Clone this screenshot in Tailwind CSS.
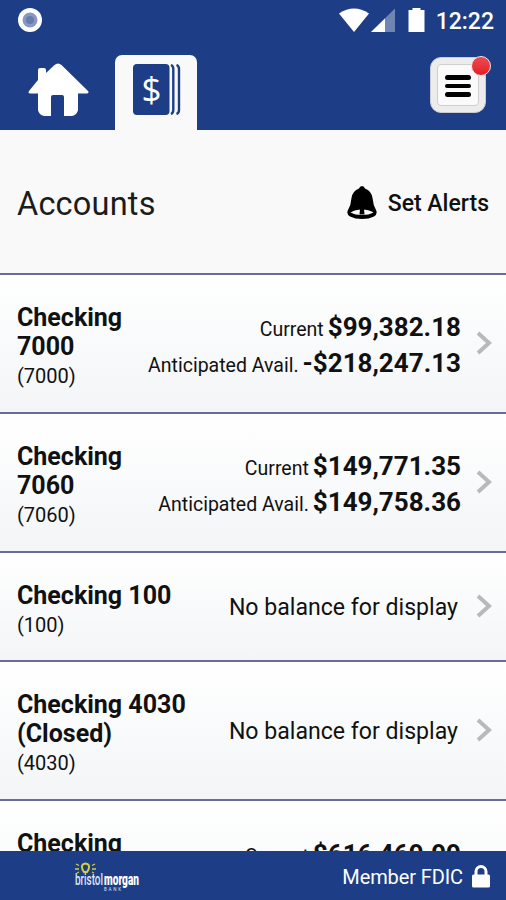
<!DOCTYPE html>
<html lang="en">
<head>
  <meta charset="UTF-8">
  <meta name="viewport" content="width=device-width, initial-scale=1.0">
  <title>Accounts</title>
  <script src="https://cdn.jsdelivr.net/npm/@tailwindcss/browser@4"></script>
</head>
<body class="h-[900px] w-[506px] overflow-hidden flex flex-col bg-[#f9f9f9] text-[#111] font-['Roboto',sans-serif]">
  <header class="h-[130px] shrink-0 bg-[#1d3e86] text-white flex flex-col">
    <!-- Status bar -->
    <div class="h-[42px] flex items-center pl-[18px] pr-[12px]">
      <svg class="w-6 h-6 -mt-[2px]" viewBox="0 0 24 24">
        <circle cx="12" cy="12" r="12" fill="#fff"/>
        <circle cx="12" cy="12" r="7.500" fill="#8798c2"/>
        <circle cx="12" cy="12" r="4" fill="#667bb0"/>
      </svg>
      <svg class="ml-auto -mt-[2px] w-[88px] h-[26px]" viewBox="0 0 88 26">
        <path d="M1 6.500Q16 -3.500 31 6.500L16 25Z" fill="#fff"/>
        <path d="M57 1.500V25H33Z" fill="#6f86b5"/>
        <path d="M47 11.500V25H33Z" fill="#fff"/>
        <path d="M70.500 3h4V1h8V3h4v22h-16Z" fill="#fff"/>
      </svg>
      <span class="ml-[10px] mt-px text-[23px] leading-[26px] font-medium">12:22</span>
    </div>

    <!-- Tabs -->
    <div class="flex-1 flex items-end">
      <svg class="ml-7 mb-[13px] w-[61px] h-[54px]" viewBox="0 0 61 54">
        <path d="M10 17V7q0-2 2-2h4q2 0 2 2v3l8.500-8Q30-1 33.500 2L60 28q1.500 2-1 2.500h-9V47q-1 5-6 6H36V34q0-2-2-2H25q-2 0-2 2V53H16q-5-1-6-6V30.500H2Q-.5 30 1 28Z" fill="#fff"/>
      </svg>
      <div class="ml-[26px] w-[82px] h-[75px] rounded-t-[7px] bg-[#f9f9f9] pl-[18px] pt-[9px]">
        <svg class="w-12 h-[51px]" viewBox="0 0 48 51">
          <rect x="0" y="0" width="36.500" height="51" rx="4" fill="#1d3e86"/>
          <path d="M38 1Q40.300 2 40.300 5V46q0 3-2.300 4M43.500 1Q46 2 46 5V46q0 3-2.500 4" fill="none" stroke="#1d3e86" stroke-width="2.400"/>
          <text x="18.500" y="37.500" text-anchor="middle" font-family="Open Sans" font-size="35" fill="#fff">$</text>
        </svg>
      </div>
      <div class="relative ml-auto mr-5 mb-[17px] w-14 h-14 rounded-[11px] bg-[#ececec] border border-[#c8cbd2] p-[6px]">
        <div class="h-full rounded-[4px] bg-[#fafafa] border border-[#cfcfcf] flex flex-col items-center justify-center gap-1 pt-[2px]">
          <span class="w-[26px] h-[4.500px] rounded-full bg-black"></span>
          <span class="w-[26px] h-[4.500px] rounded-full bg-black"></span>
          <span class="w-[26px] h-[4.500px] rounded-full bg-black"></span>
        </div>
        <span class="absolute -top-[2px] -right-[6px] w-5 h-5 rounded-full bg-linear-to-b from-[#f04850] to-[#e11c27] border-[1.500px] border-[#f3e4e9]"></span>
      </div>
    </div>
  </header>

  <section class="h-[143px] shrink-0 flex items-center pl-[17px] pr-[17px] pt-1">
    <h1 class="mt-[2px] text-[32.500px] tracking-[0.200px] text-[#1c1c1c]">Accounts</h1>
    <svg class="ml-auto w-[30px] h-[33px] -mt-[2px]" viewBox="0 0 30 33">
      <path d="M15 0q2.200 0 3 2.500Q24.500 5 25.500 12q.6 7 3.500 12Q31 28 27 30.500 22 33 15 33T3 30.500Q-1 28 1 24 4 19 4.500 12 5.500 5 12 2.500 12.800 0 15 0Z" fill="#000"/>
      <path d="M3.500 26.500Q8 23.500 15 23.500T26.500 26.500Q22 29 15 29T3.500 26.500Z" fill="#f9f9f9"/>
      <path d="M13 23h4l.5 5.500h-5Z" fill="#000"/>
    </svg>
    <span class="ml-[11px] mt-[2px] text-[23px] font-medium">Set Alerts</span>
  </section>

  <main class="flex-1 min-h-0 overflow-hidden">
    <div class="h-[139px] border-t-2 border-[#6a6b9d] bg-linear-to-b from-white to-[#f3f5f7] flex items-center pl-[17px] pr-[14px]">
      <div class="w-[120px] pt-[6px]">
        <h2 class="text-[25px] leading-[29px] font-bold">Checking 7000</h2>
        <p class="text-[20px] leading-[30px]">(7000)</p>
      </div>
      <div class="ml-auto pt-[2px] whitespace-nowrap text-[19.500px] leading-9">
        <p class="h-9 flex items-baseline justify-end gap-1">Current <b class="text-[26px]">$99,382.18</b></p>
        <p class="h-9 flex items-baseline justify-end gap-1">Anticipated Avail. <b class="text-[26px]">-$218,247.13</b></p>
      </div>
      <svg class="ml-[15px] mb-[2px] w-4 h-6" viewBox="0 0 16 24"><path d="M2 2L13 12 2 22" fill="none" stroke="#b9b9b9" stroke-width="4"/></svg>
    </div>

    <div class="h-[139px] border-t-2 border-[#6a6b9d] bg-linear-to-b from-white to-[#f3f5f7] flex items-center pl-[17px] pr-[14px]">
      <div class="w-[120px] pt-[6px]">
        <h2 class="text-[25px] leading-[29px] font-bold">Checking 7060</h2>
        <p class="text-[20px] leading-[30px]">(7060)</p>
      </div>
      <div class="ml-auto pt-[2px] whitespace-nowrap text-[19.500px] leading-9">
        <p class="h-9 flex items-baseline justify-end gap-1">Current <b class="text-[26px]">$149,771.35</b></p>
        <p class="h-9 flex items-baseline justify-end gap-1">Anticipated Avail. <b class="text-[26px]">$149,758.36</b></p>
      </div>
      <svg class="ml-[15px] mb-[2px] w-4 h-6" viewBox="0 0 16 24"><path d="M2 2L13 12 2 22" fill="none" stroke="#b9b9b9" stroke-width="4"/></svg>
    </div>

    <div class="h-[109px] border-t-2 border-[#6a6b9d] bg-linear-to-b from-white to-[#f3f5f7] flex items-center pl-[17px] pr-[14px]">
      <div class="w-[180px] pt-[7px]">
        <h2 class="text-[25px] leading-[29px] font-bold">Checking 100</h2>
        <p class="text-[20px] leading-[30px]">(100)</p>
      </div>
      <p class="ml-auto pt-[3px] whitespace-nowrap text-[23.100px]">No balance for display</p>
      <svg class="ml-[18px] mb-[2px] w-4 h-6" viewBox="0 0 16 24"><path d="M2 2L13 12 2 22" fill="none" stroke="#b9b9b9" stroke-width="4"/></svg>
    </div>

    <div class="h-[139px] border-t-2 border-[#6a6b9d] bg-linear-to-b from-white to-[#f3f5f7] flex items-center pl-[17px] pr-[14px]">
      <div class="w-[180px] pt-[6px]">
        <h2 class="text-[25px] leading-[29px] font-bold">Checking 4030 (Closed)</h2>
        <p class="text-[20px] leading-[30px]">(4030)</p>
      </div>
      <p class="ml-auto pt-[3px] whitespace-nowrap text-[23.100px]">No balance for display</p>
      <svg class="ml-[18px] mb-[2px] w-4 h-6" viewBox="0 0 16 24"><path d="M2 2L13 12 2 22" fill="none" stroke="#b9b9b9" stroke-width="4"/></svg>
    </div>

    <div class="h-[139px] border-t-2 border-[#6a6b9d] bg-linear-to-b from-white to-[#f3f5f7] flex items-start pl-[17px] pr-[45px] pt-7">
      <h2 class="text-[25px] leading-[29px] font-bold">Checking</h2>
      <p class="ml-auto mt-[7px] flex items-baseline gap-1 whitespace-nowrap text-[19.500px] leading-9">Current <b class="text-[26px]">$616,469.99</b></p>
    </div>
  </main>

  <footer class="h-[49px] shrink-0 bg-[#1d3e86] text-white flex items-center pl-[74px] pr-4">
    <svg class="w-[68px] h-8" viewBox="0 0 68 32">
      <g fill="none" stroke="#d3cf3c" stroke-width="1.300">
        <path d="M8.500 9.500Q6.500 4 11.500 3.500 16.500 4 14.500 9.500L13 12H10Z" stroke-width="2"/>
        <path d="M2 4l3 1.500M1 9h4M3 13l2-1M21 4l-3 1.500M22 9h-4M20 13l-2-1"/>
      </g>
      <text x="1" y="25" textLength="28" lengthAdjust="spacingAndGlyphs" font-family="Roboto" font-weight="500" font-size="17" fill="#dfe5f5">bristol</text>
      <text x="30" y="25" textLength="35" lengthAdjust="spacingAndGlyphs" font-family="Roboto" font-weight="900" font-size="16" fill="#fff">morgan</text>
      <text x="30" y="31" textLength="17" font-family="Roboto" font-size="4.500" fill="#dfe5f5">BANK</text>
    </svg>
    <span class="ml-auto mt-[2px] text-[20px] tracking-[-0.100px]">Member FDIC</span>
    <svg class="ml-[9px] w-[18px] h-6" viewBox="0 0 18 24">
      <path d="M4 12V7.500a5 5 0 0 1 10 0V12" fill="none" stroke="#fff" stroke-width="3"/>
      <rect x="0" y="10.500" width="18" height="13" rx="1.500" fill="#fff"/>
    </svg>
  </footer>
</body>
</html>
